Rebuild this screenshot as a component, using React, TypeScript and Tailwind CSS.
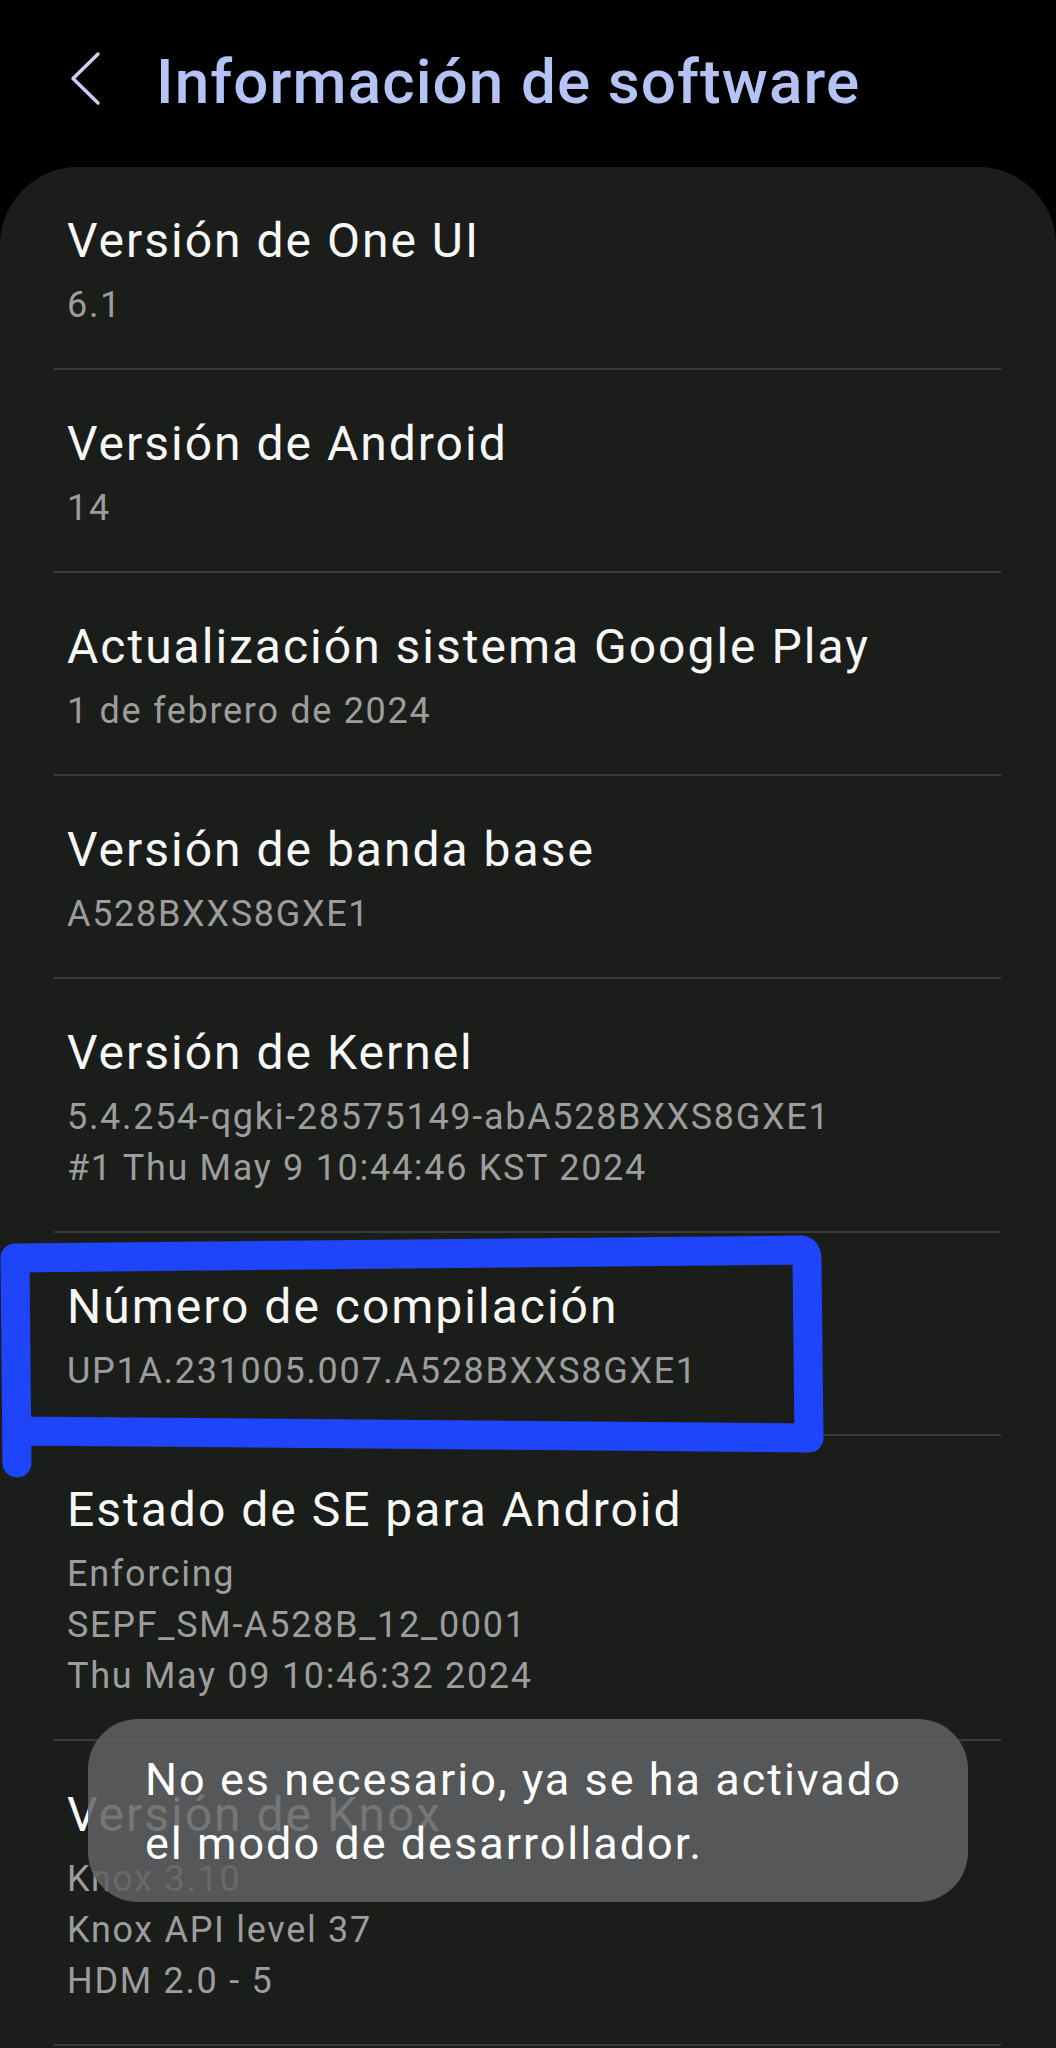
import React from 'react';

type Item = { title: string; lines: string[] };

const ITEMS: Item[] = [
  { title: 'Versión de One UI', lines: ['6.1'] },
  { title: 'Versión de Android', lines: ['14'] },
  { title: 'Actualización sistema Google Play', lines: ['1 de febrero de 2024'] },
  { title: 'Versión de banda base', lines: ['A528BXXS8GXE1'] },
  { title: 'Versión de Kernel', lines: ['5.4.254-qgki-28575149-abA528BXXS8GXE1', '#1 Thu May 9 10:44:46 KST 2024'] },
  { title: 'Número de compilación', lines: ['UP1A.231005.007.A528BXXS8GXE1'] },
  { title: 'Estado de SE para Android', lines: ['Enforcing', 'SEPF_SM-A528B_12_0001', 'Thu May 09 10:46:32 2024'] },
  { title: 'Versión de Knox', lines: ['Knox 3.10', 'Knox API level 37', 'HDM 2.0 - 5'] },
];

function Row({ item }: { item: Item }) {
  return (
    <div className="pt-[44px] pb-[37px] pl-[67px] pr-[40px]">
      <div className="text-[48px] leading-[60px] tracking-[2px] text-[#f7f7f7] whitespace-nowrap">{item.title}</div>
      <div className="mt-[9px] text-[36px] leading-[51px] tracking-[1.7px] text-[#9d9d9d] whitespace-nowrap">
        {item.lines.map(l => <div key={l}>{l}</div>)}
      </div>
    </div>
  );
}

export default function App() {
  return (
    <div className="relative w-[1056px] h-[2048px] overflow-hidden bg-black font-['Roboto',sans-serif]">
      {/* Header */}
      <div className="h-[167px] pt-[46px] pl-[60px] flex items-start">
        <svg width="50" height="72" viewBox="0 0 50 72" fill="none">
          <path d="M38 8 L13 32.5 L38 57" stroke="#c9cff0" strokeWidth="3.5" strokeLinecap="round" strokeLinejoin="round" />
        </svg>
        <h1 className="ml-[46px] text-[62px] leading-[72px] font-medium tracking-[1.1px] text-[#b4c3f4] whitespace-nowrap">
          Información de software
        </h1>
      </div>

      {/* Card */}
      <div className="bg-[#1b1d1a] rounded-[78px] pb-[80px]">
        {ITEMS.map((item, i) => (
          <div key={item.title}>
            {i > 0 && <div className="ml-[54px] mr-[55px] h-[2px] bg-[#3b3c3a]" />}
            <Row item={item} />
          </div>
        ))}
        <div className="ml-[54px] mr-[55px] h-[2px] bg-[#3b3c3a]" />
      </div>

      {/* hand drawn highlight */}
      <svg className="absolute left-0 top-0 pointer-events-none" width="1056" height="2048" viewBox="0 0 1056 2048" fill="none">
        <path
          d="M17 1463 L15 1258 L802 1250 Q808 1252 807 1262 L809 1438 L17 1431"
          stroke="#1f45fa"
          strokeWidth="29"
          strokeLinecap="round"
          strokeLinejoin="round"
        />
      </svg>

      {/* Toast */}
      <div className="absolute left-[88px] top-[1719px] w-[880px] h-[183px] rounded-[50px] bg-[rgba(96,97,99,0.86)] pl-[57px] pt-[29px] text-[45px] leading-[64px] tracking-[2px] text-white whitespace-nowrap">
        No es necesario, ya se ha activado
        <br />
        el modo de desarrollador.
      </div>
    </div>
  );
}
